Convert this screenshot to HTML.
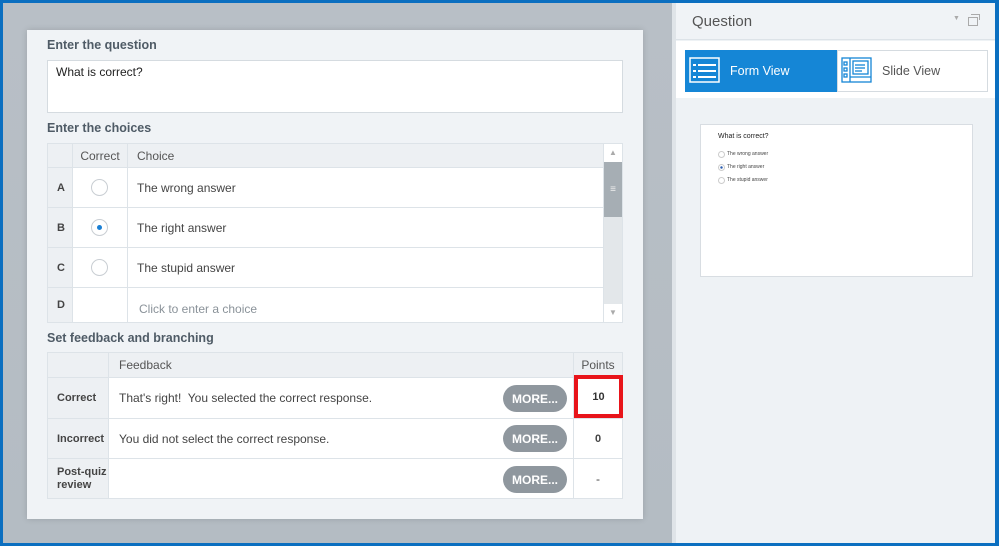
<!DOCTYPE html>
<html><head><meta charset="utf-8"><style>
*{margin:0;padding:0;box-sizing:border-box}
body{width:999px;height:546px;position:relative;overflow:hidden;background:#0b6fc0;font-family:"Liberation Sans",sans-serif;color:#333}
.a{position:absolute}
.lbl{font-size:12.5px;color:#4f5b66;font-weight:bold}
.cell{position:absolute;border:1px solid #dde3e8;background:#fff;display:flex;align-items:center;font-size:12px;color:#444}
.hd{background:#edf0f3;color:#555}
.rl{background:#edf0f3;font-weight:bold;color:#444;font-size:11px}
.radio{position:absolute;width:17px;height:17px;border:1px solid #c9ced3;border-radius:50%;background:#fff}
.more{position:absolute;width:64px;height:27px;border-radius:14px;background:#8f979e;color:#fff;font-size:12px;font-weight:bold;display:flex;align-items:center;justify-content:center}
</style></head><body>
<div class="a" style="left:3px;top:3px;width:669px;height:540px;background:linear-gradient(#b8bfc6,#b4bcc3)"></div>
<div class="a" style="left:27px;top:30px;width:616px;height:489px;background:#f0f3f6;box-shadow:0 0 6px rgba(0,0,0,.15)"></div>
<div class="a lbl" style="left:47px;top:38px">Enter the question</div>
<div class="a" style="left:47px;top:60px;width:576px;height:53px;background:#fff;border:1px solid #d5dbe0;font-size:12px;padding:4px 8px;color:#222">What is correct?</div>
<div class="a lbl" style="left:47px;top:121px">Enter the choices</div>

<div class="cell hd" style="left:47px;top:143px;width:26px;height:25px"></div>
<div class="cell hd" style="left:72px;top:143px;width:56px;height:25px;justify-content:center">Correct</div>
<div class="cell hd" style="left:127px;top:143px;width:477px;height:25px;padding-left:9px">Choice</div>
<div class="cell rl" style="left:47px;top:167px;width:26px;height:41px;padding-left:9px">A</div>
<div class="cell" style="left:72px;top:167px;width:56px;height:41px"></div>
<div class="cell" style="left:127px;top:167px;width:477px;height:41px;padding-left:9px">The wrong answer</div>
<div class="cell rl" style="left:47px;top:207px;width:26px;height:41px;padding-left:9px">B</div>
<div class="cell" style="left:72px;top:207px;width:56px;height:41px"></div>
<div class="cell" style="left:127px;top:207px;width:477px;height:41px;padding-left:9px">The right answer</div>
<div class="cell rl" style="left:47px;top:247px;width:26px;height:41px;padding-left:9px">C</div>
<div class="cell" style="left:72px;top:247px;width:56px;height:41px"></div>
<div class="cell" style="left:127px;top:247px;width:477px;height:41px;padding-left:9px">The stupid answer</div>
<div class="cell rl" style="left:47px;top:287px;width:26px;height:36px;padding-left:9px">D</div>
<div class="cell" style="left:72px;top:287px;width:56px;height:36px"></div>
<div class="cell" style="left:127px;top:287px;width:477px;height:36px;padding-left:11px;padding-top:8px;color:#8a9299">Click to enter a choice</div>
<div class="radio" style="left:91px;top:179px"></div>
<div class="radio" style="left:91px;top:219px"><div class="a" style="left:5px;top:5px;width:5px;height:5px;border-radius:50%;background:#1a7fd4"></div></div>
<div class="radio" style="left:91px;top:259px"></div>
<div class="a" style="left:603px;top:143px;width:20px;height:180px;background:#e3e7ea;border:1px solid #dde3e8"></div>
<div class="a" style="left:604px;top:144px;width:18px;height:18px;background:#fff;color:#aaa;font-size:8px;text-align:center;line-height:18px">▲</div>
<div class="a" style="left:604px;top:162px;width:18px;height:55px;background:#a6aeb4;color:#eee;font-size:10px;text-align:center;line-height:55px">≡</div>
<div class="a" style="left:604px;top:304px;width:18px;height:18px;background:#fff;color:#aaa;font-size:8px;text-align:center;line-height:18px">▼</div>

<div class="a lbl" style="left:47px;top:331px">Set feedback and branching</div>
<div class="cell hd" style="left:47px;top:352px;width:62px;height:26px"></div>
<div class="cell hd" style="left:108px;top:352px;width:466px;height:26px;padding-left:10px">Feedback</div>
<div class="cell hd" style="left:573px;top:352px;width:50px;height:26px;justify-content:center">Points</div>
<div class="cell rl" style="left:47px;top:377px;width:62px;height:42px;padding-left:9px">Correct</div>
<div class="cell" style="left:108px;top:377px;width:466px;height:42px;padding-left:10px">That's right!&nbsp; You selected the correct response.</div>
<div class="cell" style="left:573px;top:377px;width:50px;height:42px;justify-content:center;font-weight:bold;font-size:11px"></div>
<div class="cell rl" style="left:47px;top:418px;width:62px;height:41px;padding-left:9px">Incorrect</div>
<div class="cell" style="left:108px;top:418px;width:466px;height:41px;padding-left:10px">You did not select the correct response.</div>
<div class="cell" style="left:573px;top:418px;width:50px;height:41px;justify-content:center;font-weight:bold;font-size:11px">0</div>
<div class="cell rl" style="left:47px;top:458px;width:62px;height:41px;padding-left:9px;line-height:13px">Post-quiz<br>review</div>
<div class="cell" style="left:108px;top:458px;width:466px;height:41px"></div>
<div class="cell" style="left:573px;top:458px;width:50px;height:41px;justify-content:center">-</div>
<div class="a" style="left:574px;top:375px;width:49px;height:43px;border:4px solid #e8141a;background:#fff;font-weight:bold;font-size:11px;display:flex;align-items:center;justify-content:center">10</div>
<div class="more" style="left:503px;top:385px">MORE...</div>
<div class="more" style="left:503px;top:425px">MORE...</div>
<div class="more" style="left:503px;top:466px">MORE...</div>

<div class="a" style="left:672px;top:3px;width:4px;height:540px;background:#dfe4e8"></div>
<div class="a" style="left:676px;top:3px;width:319px;height:540px;background:#eef2f5"></div>
<div class="a" style="left:676px;top:3px;width:319px;height:37px;background:#f0f3f6;border-bottom:1px solid #dde3e8"></div>
<div class="a" style="left:692px;top:13px;font-size:15px;color:#555">Question</div>
<div class="a" style="left:953px;top:15px;font-size:7px;color:#aaa">▼</div>
<div class="a" style="left:968px;top:17px;width:10px;height:9px;border:1.5px solid #aaa"></div>
<div class="a" style="left:971px;top:14px;width:9px;height:6px;border-top:1.5px solid #aaa;border-right:1.5px solid #aaa"></div>
<div class="a" style="left:676px;top:41px;width:319px;height:57px;background:#fff"></div>
<div class="a" style="left:685px;top:50px;width:152px;height:42px;background:#1586d6"></div>
<svg class="a" style="left:689px;top:57px" width="32" height="27"><rect x="1" y="1" width="29" height="24" fill="none" stroke="#fff" stroke-width="1.5"/><g stroke="#fff" stroke-width="2"><line x1="4" y1="8" x2="7" y2="8"/><line x1="9" y1="8" x2="27" y2="8"/><line x1="4" y1="14" x2="7" y2="14"/><line x1="9" y1="14" x2="27" y2="14"/><line x1="4" y1="20" x2="7" y2="20"/><line x1="9" y1="20" x2="27" y2="20"/></g></svg>
<div class="a" style="left:730px;top:64px;font-size:12.5px;color:#fff">Form View</div>
<div class="a" style="left:837px;top:50px;width:151px;height:42px;background:#fff;border:1px solid #d5dbe0"></div>
<svg class="a" style="left:841px;top:57px" width="32" height="27" fill="none" stroke="#1586d6" stroke-width="1.3"><rect x="1" y="1" width="29" height="24"/><line x1="9" y1="1" x2="9" y2="25"/><line x1="9" y1="20" x2="30" y2="20"/><rect x="3" y="5" width="3" height="3"/><rect x="3" y="11" width="3" height="3"/><rect x="3" y="17" width="3" height="3"/><rect x="12" y="4" width="15" height="13"/><line x1="14" y1="8" x2="24" y2="8"/><line x1="14" y1="11" x2="24" y2="11"/><line x1="14" y1="14" x2="21" y2="14"/></svg>
<div class="a" style="left:882px;top:64px;font-size:12.5px;color:#555">Slide View</div>

<div class="a" style="left:700px;top:124px;width:273px;height:153px;background:#fff;border:1px solid #d8dde2"></div>
<div class="a" style="left:718px;top:133px;font-size:7px;color:#222">What is correct?</div>
<div class="a" style="left:718px;top:151px;width:7px;height:7px;border:1px solid #ccc;border-radius:50%"></div>
<div class="a" style="left:727px;top:151px;font-size:5px;color:#444">The wrong answer</div>
<div class="a" style="left:718px;top:164px;width:7px;height:7px;border:1px solid #ccc;border-radius:50%;background:radial-gradient(#2a5cb0 30%,#fff 40%)"></div>
<div class="a" style="left:727px;top:164px;font-size:5px;color:#444">The right answer</div>
<div class="a" style="left:718px;top:177px;width:7px;height:7px;border:1px solid #ccc;border-radius:50%"></div>
<div class="a" style="left:727px;top:177px;font-size:5px;color:#444">The stupid answer</div>
</body></html>
